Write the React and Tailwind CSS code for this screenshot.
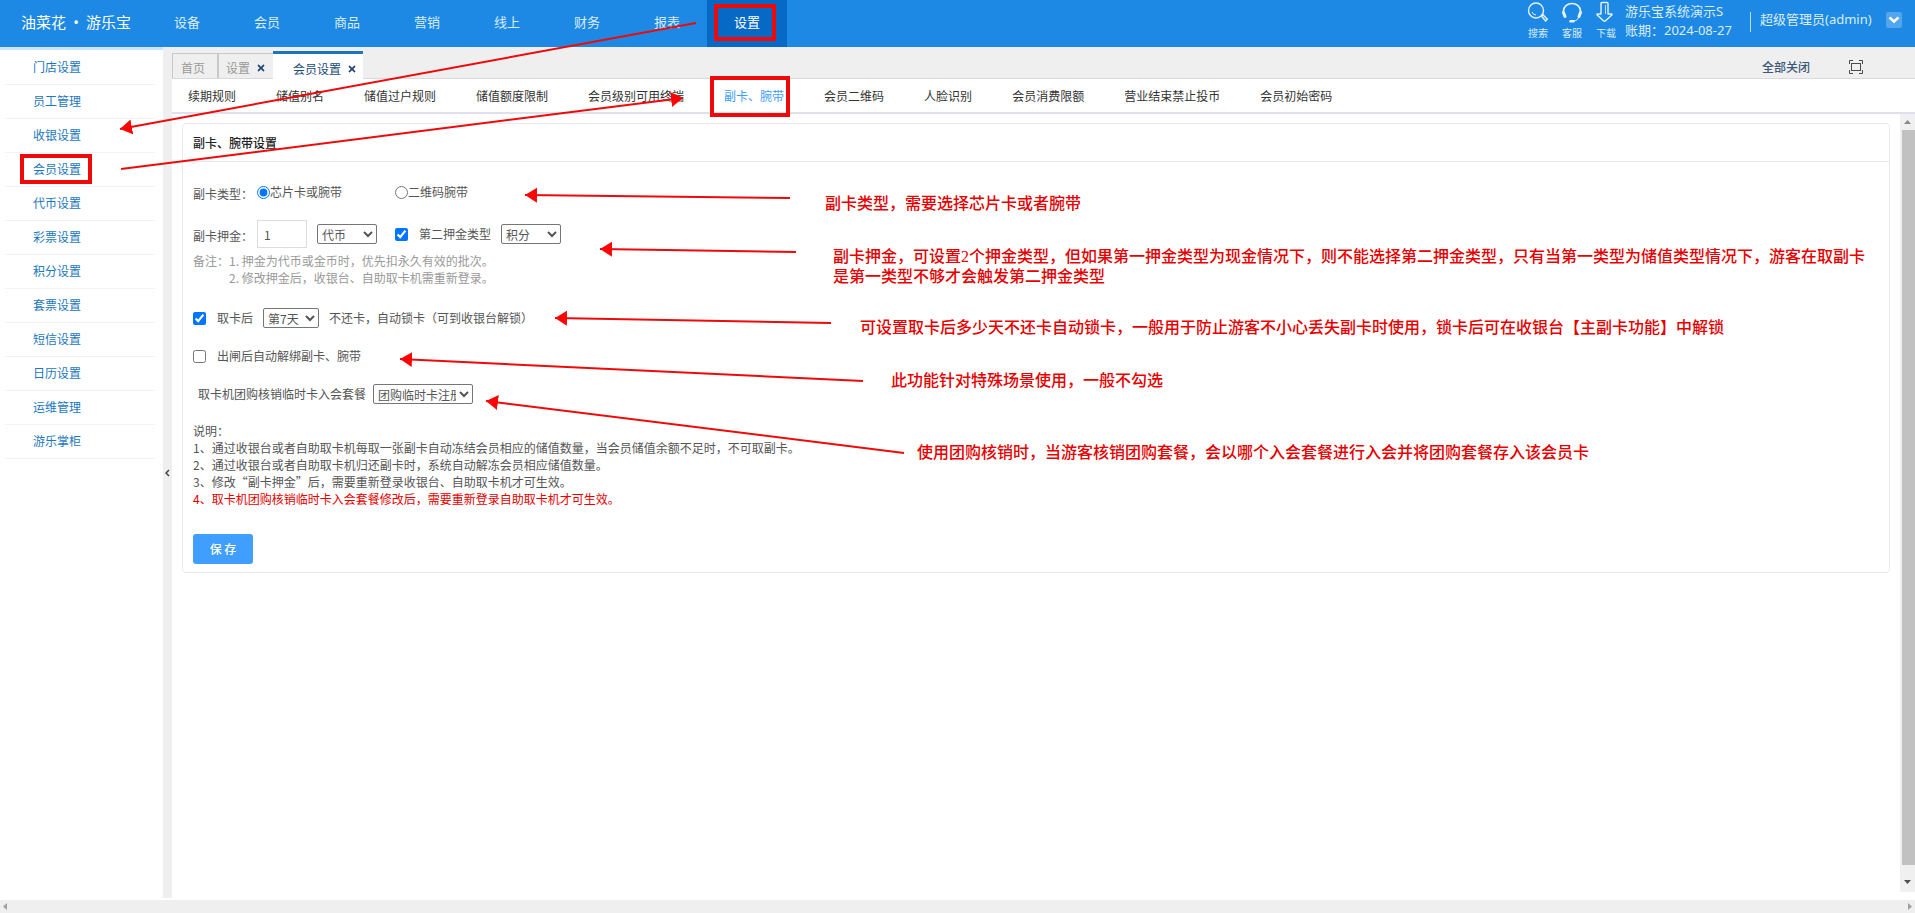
import React, { useState } from 'react';
import { FaTimes } from 'react-icons/fa';

const NAV_ITEMS = ['设备', '会员', '商品', '营销', '线上', '财务', '报表', '设置'];

const SIDE_ITEMS = [
  '门店设置',
  '员工管理',
  '收银设置',
  '会员设置',
  '代币设置',
  '彩票设置',
  '积分设置',
  '套票设置',
  '短信设置',
  '日历设置',
  '运维管理',
  '游乐掌柜',
];

const SUB_TABS = [
  '续期规则',
  '储值别名',
  '储值过户规则',
  '储值额度限制',
  '会员级别可用终端',
  '副卡、腕带',
  '会员二维码',
  '人脸识别',
  '会员消费限额',
  '营业结束禁止投币',
  '会员初始密码',
];

// [x1, y1] is the tail, [x2, y2] the tip
const ARROWS = [
  [696, 23, 120, 129],
  [121, 169, 683, 98],
  [790, 198, 525, 195],
  [796, 252, 600, 249],
  [831, 323, 555, 318],
  [863, 381, 400, 359],
  [904, 453, 486, 401],
];

const BOXES = [
  [716, 6, 58, 33],
  [22, 156, 68, 26],
  [712, 78, 76, 37],
];

function SearchIcon() {
  return (
    <svg width="22" height="22" viewBox="0 0 22 22" fill="none" stroke="#e4f2fd" strokeWidth="1.4">
      <circle cx="9" cy="9.5" r="7.5" />
      <path d="M5 11a4.5 4.5 0 0 0 4 3" strokeWidth="1" />
      <path d="M14.5 15l1.5-1.2 4.3 4.4-1.8 1.8z" />
    </svg>
  );
}

function ServiceIcon() {
  return (
    <svg width="22" height="22" viewBox="0 0 22 22" fill="none" stroke="#e4f2fd" strokeWidth="1.6">
      <path d="M2.500 12V10a8.500 7.500 0 0 1 17 0v2" />
      <path d="M2.500 11.500l1.500 4M19.500 11.500l-1.500 4" strokeWidth="3" strokeLinecap="round" />
      <path d="M18 16c-1 2.500-3 3.800-5.500 4" strokeWidth="1" />
      <path d="M9.500 20.300h3" strokeWidth="2.400" strokeLinecap="round" />
    </svg>
  );
}

function DownloadIcon() {
  return (
    <svg width="22" height="22" viewBox="0 0 22 22" fill="none" stroke="#e4f2fd" strokeWidth="1.4" strokeLinejoin="round">
      <path d="M6 2.500Q6 1.500 7 1.500h5q1 0 1 1V13h3.500q1 .2.300 1L10.300 20q-.8.600-1.600 0L2.200 14q-.7-.8.300-1H6z" />
      <path d="M10.500 4v9" strokeWidth="0.800" />
    </svg>
  );
}

function Header() {
  const tools = [
    { label: '搜索', icon: <SearchIcon /> },
    { label: '客服', icon: <ServiceIcon /> },
    { label: '下载', icon: <DownloadIcon /> },
  ];
  return (
    <header className="flex h-[47px] shrink-0 bg-[#1d89e4] font-['Noto_Sans','Noto_Sans_CJK_SC',sans-serif] text-[13px] text-[#d9ecfb]">
      <div className="flex h-11 w-[147px] items-center gap-1 pl-[21px] text-[15px] text-white">
        <span>油菜花</span>
        <span className="w-3 text-center">•</span>
        <span>游乐宝</span>
      </div>
      <nav className="flex">
        {NAV_ITEMS.map((item) => (
          <a
            key={item}
            href="#"
            className={
              item === '设置'
                ? 'flex w-20 justify-center bg-[#0769c6] pt-3 leading-5 text-white'
                : 'flex w-20 justify-center pt-3 leading-5'
            }
          >
            {item}
          </a>
        ))}
      </nav>
      <div className="ml-auto flex pr-[13px]">
        <div className="flex gap-3 pt-px">
          {tools.map((tool) => (
            <button key={tool.label} className="flex w-[22px] flex-col items-center whitespace-nowrap text-[10px] leading-5">
              {tool.icon}
              <span>{tool.label}</span>
            </button>
          ))}
        </div>
        <div className="ml-2 w-[125px] pt-[2px] leading-[19px] whitespace-nowrap">
          <div>游乐宝系统演示S</div>
          <div>账期：2024-08-27</div>
        </div>
        <div className="mt-3 h-5 w-px bg-[#b9dcf8]" />
        <div className="ml-[9px] w-[126px] pt-[9px] leading-5 whitespace-nowrap">超级管理员(admin)</div>
        <button aria-label="账户菜单" className="mt-3 flex h-4 w-4 items-center justify-center rounded-xs bg-[#51a6ee]">
          <svg width="12" height="8" viewBox="0 0 12 8" fill="none" stroke="#fff" strokeWidth="2.5">
            <path d="M1.500 1.500L6 5.500l4.500-4" />
          </svg>
        </button>
      </div>
    </header>
  );
}

function Sidebar() {
  return (
    <aside className="w-[163px] shrink-0 border-t-[3px] border-[#cbe6fb] bg-white">
      <ul className="pt-px pr-2 pl-[5px]">
        {SIDE_ITEMS.map((item) => (
          <li key={item} className="h-[34px] border-b border-[#f3f3f3]">
            <a href="#" className="block pl-7 leading-8 text-[#1c77bd]">
              {item}
            </a>
          </li>
        ))}
      </ul>
    </aside>
  );
}

function TabBar() {
  return (
    <div className="flex h-8 shrink-0 items-end border-b border-[#d8dadd] bg-[#efefef]">
      <a href="#" className="h-[25px] w-[45px] border-t border-l border-[#c9c9c9] pl-2 leading-7 text-[#999]">
        首页
      </a>
      <div className="flex h-[25px] w-14 items-center gap-[6px] border-t border-l-2 border-[#c9c9c9] pt-1 pl-[7px] text-[#999]">
        <a href="#">设置</a>
        <button aria-label="关闭设置">
          <FaTimes size={10} color="#234a75" />
        </button>
      </div>
      <div className="-mb-px flex h-7 w-[90px] items-center gap-[6px] border-t-[3px] border-[#1a76bd] bg-white pt-1 pl-5 text-[#234a75]">
        <a href="#">会员设置</a>
        <button aria-label="关闭会员设置">
          <FaTimes size={10} />
        </button>
      </div>
      <div className="ml-auto flex h-full items-center gap-[38px] pr-[51px]">
        <button className="pt-2 font-medium text-[#3c5878]">全部关闭</button>
        <button aria-label="全屏" className="pt-2">
          <svg width="16" height="16" viewBox="0 0 16 16" fill="none" stroke="#4a4a4a" strokeWidth="1">
            <rect x="3.500" y="4.500" width="9" height="7" />
            <path d="M1.500 5V1.500H5M11 1.500h3.500V5M14.500 11v3.500H11M5 14.500H1.500V11" />
          </svg>
        </button>
      </div>
    </div>
  );
}

function SettingsForm() {
  const [cardType, setCardType] = useState('chip');
  return (
    <form className="pt-5 pr-4 pb-2 pl-[10px]">
      <div className="flex h-5 items-center">
        <span className="w-16 pt-1">副卡类型：</span>
        <label className="flex w-[138px] items-center">
          <input type="radio" name="cardType" className="h-[13px] w-[13px]" checked={cardType === 'chip'} onChange={() => setCardType('chip')} />
          芯片卡或腕带
        </label>
        <label className="flex items-center">
          <input type="radio" name="cardType" className="h-[13px] w-[13px]" checked={cardType === 'qr'} onChange={() => setCardType('qr')} />
          二维码腕带
        </label>
      </div>

      <div className="mt-[18px] flex h-7 items-center">
        <label htmlFor="deposit" className="w-16 pt-1">副卡押金：</label>
        <input id="deposit" type="text" defaultValue="1" className="h-7 w-[50px] border border-[#ddd] px-[6px]" />
        <select aria-label="押金类型" className="ml-[10px] h-5 w-[60px] rounded-xs border border-[#767676]">
          <option>代币</option>
          <option>现金</option>
        </select>
        <label className="ml-[18px] flex items-center gap-[11px]">
          <input type="checkbox" className="h-[13px] w-[13px]" defaultChecked />
          第二押金类型
        </label>
        <select aria-label="第二押金类型" className="ml-[10px] h-5 w-[60px] rounded-xs border border-[#767676]">
          <option>积分</option>
          <option>代币</option>
        </select>
      </div>

      <div className="mt-1 flex leading-[17px] text-[#999]">
        <span className="w-9">备注：</span>
        <div>
          <p>1. 押金为代币或金币时，优先扣永久有效的批次。</p>
          <p>2. 修改押金后，收银台、自助取卡机需重新登录。</p>
        </div>
      </div>

      <div className="mt-[22px] flex h-5 items-center">
        <label className="flex items-center gap-[11px]">
          <input type="checkbox" className="h-[13px] w-[13px]" defaultChecked />
          取卡后
        </label>
        <select aria-label="锁卡天数" className="mx-[10px] h-5 w-14 rounded-xs border border-[#767676]">
          <option>第7天</option>
          <option>第8天</option>
        </select>
        <span>不还卡，自动锁卡（可到收银台解锁）</span>
      </div>

      <label className="mt-[18px] flex h-5 items-center gap-[11px]">
        <input type="checkbox" className="h-[13px] w-[13px]" />
        出闸后自动解绑副卡、腕带
      </label>

      <div className="mt-[18px] flex h-5 items-center gap-[7px] pl-[5px]">
        <label htmlFor="package">取卡机团购核销临时卡入会套餐</label>
        <select id="package" className="h-5 w-[100px] rounded-xs border border-[#767676]">
          <option>团购临时卡注册</option>
        </select>
      </div>

      <div className="mt-[18px] leading-[17px]">
        <p>说明：</p>
        <p>1、通过收银台或者自助取卡机每取一张副卡自动冻结会员相应的储值数量，当会员储值余额不足时，不可取副卡。</p>
        <p>2、通过收银台或者自助取卡机归还副卡时，系统自动解冻会员相应储值数量。</p>
        <p>3、修改“副卡押金”后，需要重新登录收银台、自助取卡机才可生效。</p>
        <p className="text-[#e60000]">4、取卡机团购核销临时卡入会套餐修改后，需要重新登录自助取卡机才可生效。</p>
      </div>

      <button type="button" className="mt-[27px] h-[30px] w-[60px] rounded-[3px] bg-[#409eff] font-medium text-white">
        保 存
      </button>
    </form>
  );
}

function ScrollBarY() {
  return (
    <div className="mb-2 flex w-[15px] shrink-0 flex-col items-center bg-[#f0f0f0]">
      <svg width="15" height="16" viewBox="0 0 15 16" fill="#8a8a8a">
        <path d="M4 10h7L7.500 6z" />
      </svg>
      <div className="w-[13px] flex-1 self-end bg-[#c1c1c1]" />
      <svg width="15" height="27" viewBox="0 0 15 27" fill="#505050">
        <path d="M4 15h7l-3.500 4z" />
      </svg>
    </div>
  );
}

function ScrollBarX() {
  return (
    <div className="flex h-[13px] shrink-0 items-center justify-between bg-[#efefef] px-[3px]">
      <svg width="4" height="7" viewBox="0 0 4 7" fill="#a0a0a0">
        <path d="M4 0v7L0 3.500z" />
      </svg>
      <svg width="4" height="7" viewBox="0 0 4 7" fill="#a0a0a0">
        <path d="M0 0v7l4-3.500z" />
      </svg>
    </div>
  );
}

function Annotations() {
  return (
    <div className="pointer-events-none absolute inset-0 overflow-hidden font-['Liberation_Serif','Noto_Sans_CJK_SC',serif] text-base leading-5 font-medium whitespace-nowrap text-[#e60000]">
      <svg className="absolute inset-0 h-full w-full" fill="none" stroke="#ee0a0a">
        <defs>
          <marker id="tip" markerUnits="userSpaceOnUse" markerWidth="12" markerHeight="16" refX="12" refY="8" orient="auto">
            <path d="M0 0.500L12 8L0 15.500z" fill="#fa0505" stroke="none" />
          </marker>
        </defs>
        {ARROWS.map(([x1, y1, x2, y2]) => (
          <line key={`${x1}-${y1}`} x1={x1} y1={y1} x2={x2} y2={y2} strokeWidth="2" markerEnd="url(#tip)" />
        ))}
        {BOXES.map(([x, y, w, h]) => (
          <rect key={x} x={x} y={y} width={w} height={h} strokeWidth="4" />
        ))}
      </svg>
      <p className="absolute top-[194px] left-[825px]">副卡类型，需要选择芯片卡或者腕带</p>
      <p className="absolute top-[247px] left-[833px]">
        副卡押金，可设置2个押金类型，但如果第一押金类型为现金情况下，则不能选择第二押金类型，只有当第一类型为储值类型情况下，游客在取副卡
        <br />
        是第一类型不够才会触发第二押金类型
      </p>
      <p className="absolute top-[318px] left-[860px]">
        可设置取卡后多少天不还卡自动锁卡，一般用于防止游客不小心丢失副卡时使用，锁卡后可在收银台【主副卡功能】中解锁
      </p>
      <p className="absolute top-[371px] left-[891px]">此功能针对特殊场景使用，一般不勾选</p>
      <p className="absolute top-[443px] left-[917px]">
        使用团购核销时，当游客核销团购套餐，会以哪个入会套餐进行入会并将团购套餐存入该会员卡
      </p>
    </div>
  );
}

export default function App() {
  return (
    <div
      lang="zh-CN"
      className="relative flex h-screen flex-col overflow-hidden bg-white font-['Noto_Sans_CJK_SC',sans-serif] text-xs text-[#555]"
    >
      <Header />
      <div className="flex min-h-0 flex-1">
        <Sidebar />
        <button aria-label="收起菜单" className="mb-[2px] flex w-[9px] shrink-0 items-center justify-center bg-[#efefef]">
          <svg width="5" height="8" viewBox="0 0 5 8" fill="none" stroke="#444" strokeWidth="1.500">
            <path d="M4 1L1 4l3 3" />
          </svg>
        </button>
        <main className="flex min-w-0 flex-1 flex-col">
          <TabBar />
          <nav className="flex h-[35px] shrink-0 gap-10 border-b-2 border-[#dfe0ec] pl-4 leading-[34px] whitespace-nowrap text-[#333]">
            {SUB_TABS.map((tab) => (
              <a key={tab} href="#" className={tab === '副卡、腕带' ? 'text-[#409eff]' : ''}>
                {tab}
              </a>
            ))}
          </nav>
          <div className="flex min-h-0 flex-1">
            <div className="min-w-0 flex-1 pt-[9px] pr-[10px] pl-[10px]">
              <section className="rounded border border-[#e8eaee]">
                <h2 className="border-b border-[#e8eaee] pl-[10px] leading-[37px] font-medium text-[#222]">副卡、腕带设置</h2>
                <SettingsForm />
              </section>
            </div>
            <ScrollBarY />
          </div>
        </main>
      </div>
      <ScrollBarX />
      <Annotations />
    </div>
  );
}
